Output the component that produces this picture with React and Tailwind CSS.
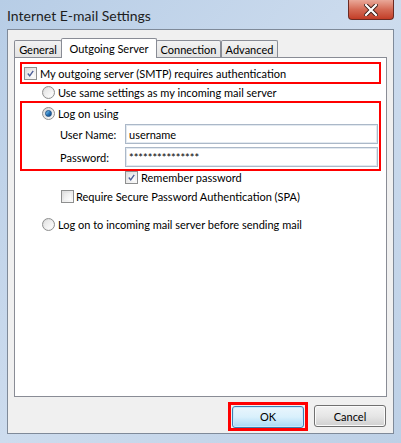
import React from 'react';

const font = { fontFamily: 'Lato, "Liberation Sans", sans-serif' };

// Win7 style checkbox
const CheckBox = ({ checked }) => (
  <div className="w-[13px] h-[13px] shrink-0 border border-[#8e8f8f] bg-gradient-to-br from-[#dcdcdc] to-[#fbfbfb] p-[2px]">
    <div className="w-full h-full bg-gradient-to-br from-[#e6e6e6] to-[#ffffff] flex items-center justify-center">
      {checked && (
        <svg width="9" height="9" viewBox="0 0 9 9">
          <path d="M1 4.5 L3.5 7.5 L8 1" fill="none" stroke="#4d5f99" strokeWidth="1.8" />
        </svg>
      )}
    </div>
  </div>
);

const Radio = ({ checked }) => (
  <div className="w-[13px] h-[13px] shrink-0 rounded-full border border-[#8e8f8f] bg-gradient-to-br from-[#d8d8d8] to-[#fafafa] flex items-center justify-center">
    {checked ? (
      <div className="w-[7px] h-[7px] rounded-full bg-gradient-to-br from-[#8fd4f5] via-[#2a7cc0] to-[#0e3c74] border border-[#1b4f86]" />
    ) : (
      <div className="w-[9px] h-[9px] rounded-full bg-gradient-to-br from-[#e2e2e2] to-[#ffffff]" />
    )}
  </div>
);

const Tab = ({ label, selected, w }) =>
  selected ? (
    <div className={`${w} h-[20px] -mb-[1px] -mx-[1px] z-10 bg-white border border-[#898c95] border-b-0 rounded-t-[2px] flex items-center justify-center pb-[1px]`}>
      {label}
    </div>
  ) : (
    <div className={`${w} h-[17px] bg-gradient-to-b from-[#f2f2f2] to-[#e3e3e3] border border-[#898c95] border-b-0 rounded-t-[2px] flex items-center justify-center`}>
      {label}
    </div>
  );

const TextBox = ({ value }) => (
  <div className="w-[253px] h-[20px] border border-[#abb8c8] bg-white shadow-[inset_0_0_0_1px_#e2e9f0] flex items-center px-[3px]">
    {value}
  </div>
);

const App = () => {
  return (
    <div
      className="w-[401px] h-[443px] bg-gradient-to-br from-[#b7cde6] via-[#cddcee] to-[#bdd0e6] text-[11px] text-black leading-none flex flex-col overflow-hidden"
      style={font}
    >
      {/* Title bar */}
      <div className="h-[29px] flex items-start justify-between shrink-0">
        <div className="pl-[7px] pt-[9px] text-[14px] text-[#1e1e1e]">Internet E-mail Settings</div>
        <div className="mr-[7px] w-[46px] h-[20px] rounded-b-[4px] border border-t-0 border-[#6b2a22] bg-gradient-to-b from-[#e9a899] via-[#d46a55] to-[#c23c26] flex items-center justify-center">
          <svg width="14" height="12" viewBox="0 0 14 12">
            <path d="M2 1 L12 11 M12 1 L2 11" stroke="#3a1a14" strokeWidth="4" strokeLinecap="square" />
            <path d="M2 1 L12 11 M12 1 L2 11" stroke="#ffffff" strokeWidth="2.2" strokeLinecap="square" />
          </svg>
        </div>
      </div>

      {/* Client area */}
      <div className="mx-[7px] h-[405px] border border-[#7f8a99] bg-[#f0f0f0] pt-[7px] pl-[6px] pr-[7px] flex flex-col">
        {/* Tabs */}
        <div className="flex items-end h-[20px]">
          <Tab label="General" w="w-[48px]" />
          <Tab label="Outgoing Server" w="w-[96px]" selected />
          <Tab label="Connection" w="w-[65px]" />
          <Tab label="Advanced" w="w-[57px]" />
        </div>

        {/* Panel */}
        <div className="w-[373px] h-[340px] bg-white border border-[#898c95] px-[5px] flex flex-col">
          <div className="mt-[4px] h-[22px] border-2 border-[#ff0000] flex items-center gap-[3px] pl-[2px]">
            <CheckBox checked />
            <span>My outgoing server (SMTP) requires authentication</span>
          </div>

          <div className="h-[17px] flex items-center gap-[3px] pl-[22px]">
            <Radio />
            <span>Use same settings as my incoming mail server</span>
          </div>

          <div className="h-[70px] border-2 border-[#ff0000] flex flex-col">
            <div className="mt-[1px] h-[18px] flex items-center gap-[3px] pl-[20px]">
              <Radio checked />
              <span>Log on using</span>
            </div>
            <div className="mt-[2px] flex items-center pl-[38px]">
              <span className="w-[65px]">User Name:</span>
              <TextBox value="username" />
            </div>
            <div className="mt-[3px] flex items-center pl-[38px]">
              <span className="w-[65px]">Password:</span>
              <TextBox value="***************" />
            </div>
          </div>

          <div className="h-[13px] flex items-center gap-[3px] pl-[105px]">
            <CheckBox checked />
            <span>Remember password</span>
          </div>

          <div className="mt-[6px] h-[13px] flex items-center gap-[2px] pl-[41px]">
            <CheckBox />
            <span>Require Secure Password Authentication (SPA)</span>
          </div>

          <div className="mt-[15px] h-[13px] flex items-center gap-[3px] pl-[22px]">
            <Radio />
            <span>Log on to incoming mail server before sending mail</span>
          </div>
        </div>

        {/* Buttons */}
        <div className="mt-[5px] flex justify-end items-start gap-[6px]">
          <div className="w-[80px] h-[29px] border-[3px] border-[#ff0000] flex items-center justify-center">
            <div className="w-[72px] h-[22px] rounded-[3px] border border-[#3c7fb1] bg-gradient-to-b from-[#eaf6fd] via-[#d9f0fc] to-[#a7d9f5] shadow-[inset_0_0_0_1px_#c7eafc] flex items-center justify-center">
              OK
            </div>
          </div>
          <div className="mt-[3px] w-[72px] h-[22px] rounded-[3px] border border-[#707070] bg-gradient-to-b from-[#f2f2f2] via-[#e6e6e6] to-[#d0d0d0] shadow-[inset_0_0_0_1px_#fbfbfb] flex items-center justify-center">
            Cancel
          </div>
        </div>
      </div>
    </div>
  );
};

export default App;
